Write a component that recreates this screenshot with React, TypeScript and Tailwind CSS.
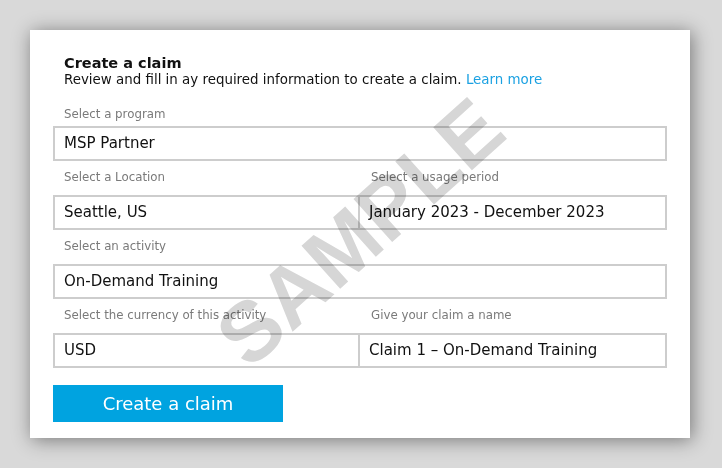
export default function App() {
  const font = { fontFamily: '"DejaVu Sans", Verdana, sans-serif' };

  const Box = ({ children, className = "" }: { children: React.ReactNode; className?: string }) => (
    <div className={`h-[35px] border-2 border-[#cdcdcd] flex items-center px-[9px] text-[15px] text-[#111] ${className}`}>
      {children}
    </div>
  );

  const Label = ({ children, first = false }: { children: React.ReactNode; first?: boolean }) => (
    <div className={`${first ? "h-[22px]" : "h-[34px]"} flex items-center pl-[11px] text-[11.8px] text-[#7a7a7a]`}>
      {children}
    </div>
  );

  return (
    <div className="w-[722px] h-[468px] bg-[#d9d9d9] pt-[30px] pl-[30px]" style={font}>
      <div className="relative w-[660px] h-[408px] bg-white shadow-[2px_2px_18px_rgba(0,0,0,0.45)] px-[23px] pt-[24px] overflow-hidden">
        <div className="pl-[11px]">
          <h1 className="text-[14.5px] font-bold leading-[18px] text-[#111]">Create a claim</h1>
          <p className="text-[13.4px] leading-[16px] text-[#111]">
            Review and fill in ay required information to create a claim.{" "}
            <a href="#" className="text-[#1ba1e2]">Learn more</a>
          </p>
        </div>

        <div className="mt-[16px]">
          <Label first>Select a program</Label>
          <Box>MSP Partner</Box>

          <div className="grid grid-cols-2">
            <div>
              <Label>Select a Location</Label>
              <Box>Seattle, US</Box>
            </div>
            <div>
              <Label>Select a usage period</Label>
              <Box className="border-l-0">January 2023 - December 2023</Box>
            </div>
          </div>

          <Label>Select an activity</Label>
          <Box>On-Demand Training</Box>

          <div className="grid grid-cols-2">
            <div>
              <Label>Select the currency of this activity</Label>
              <Box>USD</Box>
            </div>
            <div>
              <Label>Give your claim a name</Label>
              <Box className="border-l-0">Claim 1 – On-Demand Training</Box>
            </div>
          </div>

          <button className="mt-[17px] w-[230px] h-[37px] bg-[#00a3e0] text-white text-[18px]">
            Create a claim
          </button>
        </div>

        {/* watermark */}
        <div className="pointer-events-none absolute left-[330px] top-[202px] -translate-x-1/2 -translate-y-1/2 -rotate-[42deg] mix-blend-multiply">
          <span
            className="text-[84px] font-bold text-[#d6d6d6] leading-none whitespace-nowrap"
            style={{ fontFamily: '"Liberation Sans", Arial, sans-serif' }}
          >
            SAMPLE
          </span>
        </div>
      </div>
    </div>
  );
}
